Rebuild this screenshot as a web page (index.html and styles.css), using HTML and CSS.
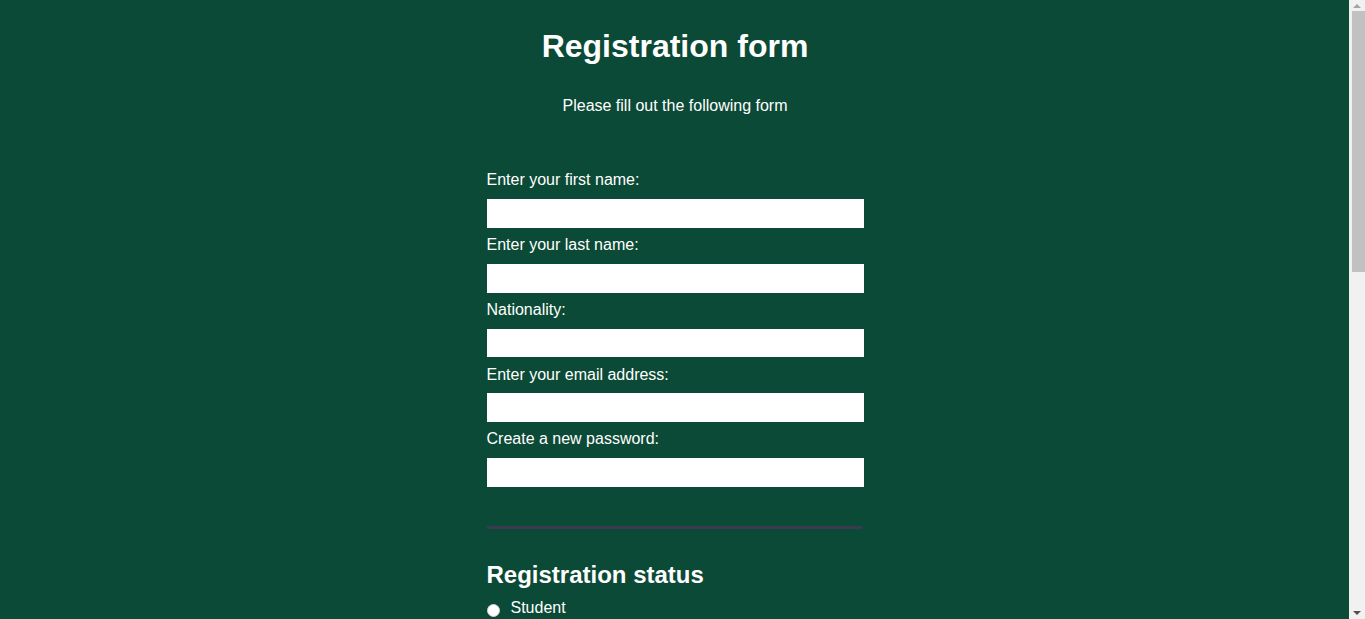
FILE: index.html
```html
<!DOCTYPE html>
<html lang="en">
<head>
<meta charset="utf-8">
<title>Registration form</title>
<link rel="stylesheet" href="styles.css">
</head>
<body>
  <header class="header">
    <h1 class="title">Registration form</h1>
    <p class="subtitle">Please fill out the following form</p>
  </header>
  <form class="form">
    <label class="field-label" for="first">Enter your first name:</label>
    <input class="text-input" id="first" type="text">
    <label class="field-label" for="last">Enter your last name:</label>
    <input class="text-input" id="last" type="text">
    <label class="field-label" for="nat">Nationality:</label>
    <input class="text-input" id="nat" type="text">
    <label class="field-label" for="email">Enter your email address:</label>
    <input class="text-input" id="email" type="email">
    <label class="field-label" for="pw">Create a new password:</label>
    <input class="text-input" id="pw" type="password">

    <hr class="divider">

    <h2 class="section-title">Registration status</h2>
    <label class="radio-row"><input class="radio" type="radio" name="status"><span>Student</span></label>
    <label class="radio-row"><input class="radio" type="radio" name="status"><span>Teacher</span></label>
    <label class="radio-row"><input class="radio" type="radio" name="status"><span>Other</span></label>

    <hr class="divider">

    <h2 class="section-title">Additional information</h2>
    <label class="field-label" for="age">Enter your age:</label>
    <input class="text-input" id="age" type="number">
    <label class="field-label" for="ref">How did you hear about us?</label>
    <select class="select-input" id="ref">
      <option>(select one)</option>
    </select>
    <label class="field-label" for="bio">Provide a bio:</label>
    <textarea class="area-input" id="bio" rows="4"></textarea>
    <label class="check-row"><input class="check" type="checkbox"><span>I accept the terms and conditions</span></label>
    <input class="submit" type="submit" value="Submit">
  </form>
  <div class="scrollbar" aria-hidden="true">
    <span class="scroll-arrow scroll-up"></span>
    <span class="scroll-thumb"></span>
    <span class="scroll-arrow scroll-down"></span>
  </div>
</body>
</html>
```

FILE: styles.css
```css
html, body {
  margin: 0;
  padding: 0;
}

body {
  background: #0b4a36;
  color: #ffffff;
  font-family: "Liberation Sans", Arial, sans-serif;
  font-size: 16px;
  padding-right: 15px;
}

.header {
  text-align: center;
  padding-top: 28px;
}

.title {
  margin: 0;
  font-size: 32px;
  line-height: 37px;
  font-weight: bold;
}

.subtitle {
  margin: 32px 0 0;
  line-height: 18.4px;
}

.form {
  width: 377px;
  margin: 55px auto 0;
  padding-bottom: 120px;
}

.field-label {
  display: block;
  line-height: 18.4px;
  padding-top: 1px;
}

.text-input {
  display: block;
  width: 100%;
  box-sizing: border-box;
  height: 28.6px;
  margin: 9.4px 0 7.35px;
  border: none;
  padding: 0 6px;
  background: #ffffff;
  font-family: inherit;
  font-size: 16px;
}

.divider {
  width: 375px;
  height: 3px;
  border: none;
  background: #3b3b4f;
  margin: 39.3px 0 0;
}

.section-title {
  margin: 31.6px 0 11px;
  font-size: 24px;
  line-height: 27.6px;
  font-weight: bold;
}

.radio-row,
.check-row {
  display: flex;
  align-items: flex-start;
  line-height: 18.4px;
  margin-bottom: 8px;
}

.radio {
  appearance: none;
  -webkit-appearance: none;
  width: 13px;
  height: 13px;
  margin: 4.7px 11px 0 0;
  border-radius: 50%;
  background: #ffffff;
  border: 1px solid #d6d6d6;
  box-sizing: border-box;
  flex: none;
}

.check {
  width: 13px;
  height: 13px;
  margin: 3px 11px 0 0;
  flex: none;
}

.select-input,
.area-input {
  display: block;
  width: 100%;
  box-sizing: border-box;
  margin: 10.4px 0 7.35px;
  border: none;
  background: #ffffff;
  font-family: inherit;
  font-size: 16px;
}

.select-input {
  height: 28.6px;
}

.area-input {
  height: 120px;
  resize: vertical;
}

.submit {
  display: block;
  width: 100%;
  height: 40px;
  margin-top: 24px;
  border: none;
  background: #3b3b4f;
  color: #ffffff;
  font-family: inherit;
  font-size: 18px;
}

.scrollbar {
  position: fixed;
  top: 0;
  right: 0;
  width: 16px;
  height: 100vh;
  background: #f1f1f1;
  display: flex;
  flex-direction: column;
  align-items: center;
}

.scroll-arrow {
  width: 0;
  height: 0;
  border-left: 4px solid transparent;
  border-right: 4px solid transparent;
  flex: none;
}

.scroll-up {
  margin-top: 4px;
  border-bottom: 4px solid #a3a3a3;
}

.scroll-down {
  margin-top: auto;
  margin-bottom: 4px;
  border-top: 4px solid #505050;
}

.scroll-thumb {
  width: 13px;
  height: 261px;
  margin: 3px 0 0 3px;
  background: #c1c1c1;
  flex: none;
}
```
